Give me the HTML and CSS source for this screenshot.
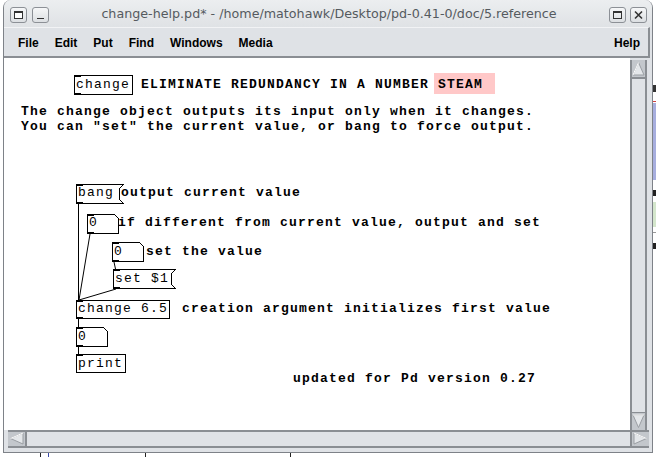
FILE: index.html
```html
<!DOCTYPE html>
<html>
<head>
<meta charset="utf-8">
<link rel="stylesheet" href="styles.css">
</head>
<body>
<div class="win">
  <div class="titlebar">
    <div class="tbtn"><svg width="15" height="14" viewBox="0 0 15 14"><rect x="3.5" y="3.5" width="8" height="7" fill="#fff" stroke="#333"/><line x1="3.5" y1="4.5" x2="11.5" y2="4.5" stroke="#333"/></svg></div>
    <div class="tbtn tbtn-gap"><svg width="15" height="14" viewBox="0 0 15 14"><line x1="4" y1="10.5" x2="11" y2="10.5" stroke="#333" stroke-width="1"/></svg></div>
    <div class="title">change-help.pd* - /home/matohawk/Desktop/pd-0.41-0/doc/5.reference</div>
    <div class="tbtn"><svg width="15" height="14" viewBox="0 0 15 14"><rect x="3.5" y="3.5" width="8" height="7" fill="none" stroke="#333"/><line x1="3.5" y1="4.5" x2="11.5" y2="4.5" stroke="#333"/></svg></div>
    <div class="tbtn tbtn-close"><svg width="15" height="14" viewBox="0 0 15 14"><path d="M4 3.5 L11 10.5 M11 3.5 L4 10.5" stroke="#333" stroke-width="1.6"/></svg></div>
  </div>
  <div class="menubar">
    <span class="mi">File</span>
    <span class="mi">Edit</span>
    <span class="mi">Put</span>
    <span class="mi">Find</span>
    <span class="mi">Windows</span>
    <span class="mi">Media</span>
    <span class="mi mi-help">Help</span>
  </div>
  <div class="main">
    <div class="canvas">
      <svg class="wires" width="626" height="372" viewBox="0 0 626 372">
        <rect x="430" y="15" width="61" height="21" fill="#ffc8c8"/>
        <g fill="none" stroke="#000" stroke-width="1" shape-rendering="crispEdges">
          <polygon points="70.5,17.5 128.5,17.5 128.5,36.5 70.5,36.5"/>
          <polygon points="72.5,126.5 119.5,126.5 115.5,130.5 115.5,141.5 119.5,145.5 72.5,145.5"/>
          <polygon points="83.5,156.5 110.5,156.5 114.5,160.5 114.5,175.5 83.5,175.5"/>
          <polygon points="108.5,184.5 135.5,184.5 139.5,188.5 139.5,203.5 108.5,203.5"/>
          <polygon points="109.5,211.5 171.5,211.5 167.5,215.5 167.5,226.5 171.5,230.5 109.5,230.5"/>
          <polygon points="72.5,242.5 165.5,242.5 165.5,260.5 72.5,260.5"/>
          <polygon points="72.5,269.5 99.5,269.5 103.5,273.5 103.5,288.5 72.5,288.5"/>
          <polygon points="72.5,296.5 121.5,296.5 121.5,314.5 72.5,314.5"/>
        </g>
        <g stroke="#000" stroke-width="1" fill="none">
          <line x1="74.5" y1="146" x2="74.5" y2="242"/>
          <line x1="86" y1="176" x2="75" y2="242"/>
          <line x1="110" y1="204" x2="111.5" y2="211"/>
          <line x1="112" y1="231" x2="75" y2="242"/>
          <line x1="74.5" y1="261" x2="74.5" y2="269"/>
          <line x1="74.5" y1="289" x2="74.5" y2="296"/>
        </g>
        <g fill="#000">
          <rect x="70" y="17" width="7" height="2"/><rect x="70" y="35" width="7" height="2"/>
          <rect x="72" y="126" width="7" height="2"/><rect x="72" y="144" width="7" height="2"/>
          <rect x="83" y="156" width="7" height="2"/><rect x="83" y="174" width="7" height="2"/>
          <rect x="108" y="184" width="7" height="2"/><rect x="108" y="202" width="7" height="2"/>
          <rect x="109" y="211" width="7" height="2"/><rect x="109" y="229" width="7" height="2"/>
          <rect x="72" y="242" width="7" height="2"/><rect x="72" y="259" width="7" height="2"/>
          <rect x="72" y="269" width="7" height="2"/><rect x="72" y="287" width="7" height="2"/>
          <rect x="72" y="296" width="7" height="2"/>
        </g>
      </svg>
      <div class="t obj t-change">change</div>
      <div class="t c-elim">ELIMINATE REDUNDANCY IN A NUMBER</div>
      <div class="t c-steam">STEAM</div>
      <div class="t c-para1">The change object outputs its input only when it changes.</div>
      <div class="t c-para2">You can "set" the current value, or bang to force output.</div>
      <div class="t obj o-bang">bang</div>
      <div class="t c-out">output current value</div>
      <div class="t obj o-num1">0</div>
      <div class="t c-ifdiff">if different from current value, output and set</div>
      <div class="t obj o-num2">0</div>
      <div class="t c-setval">set the value</div>
      <div class="t obj o-set">set $1</div>
      <div class="t obj o-chg">change 6.5</div>
      <div class="t c-creation">creation argument initializes first value</div>
      <div class="t obj o-num3">0</div>
      <div class="t obj o-print">print</div>
      <div class="t c-updated">updated for Pd version 0.27</div>
    </div>
    <div class="vscroll">
      <div class="arrow arrow-up"><svg width="13" height="15" viewBox="0 0 13 15"><polygon points="6.5,1.5 12,14 1,14" fill="#e4e7ea" stroke="#9a9ea3"/><polyline points="1,14 6.5,1.5" fill="none" stroke="#fff"/></svg></div>
      <div class="vtrough"></div>
      <div class="arrow arrow-down"><svg width="13" height="15" viewBox="0 0 13 15"><polygon points="1,1 12,1 6.5,13.5" fill="#e4e7ea" stroke="#9a9ea3"/><polyline points="1,1 12,1" fill="none" stroke="#fff"/></svg></div>
    </div>
  </div>
  <div class="hscroll">
    <div class="harrow"><svg width="15" height="13" viewBox="0 0 15 13"><polygon points="1.5,6.5 14,1 14,12" fill="#e4e7ea" stroke="#9a9ea3"/><polyline points="1.5,6.5 14,1" fill="none" stroke="#fff"/></svg></div>
    <div class="htrough"></div>
    <div class="harrow"><svg width="15" height="13" viewBox="0 0 15 13"><polygon points="1,1 13.5,6.5 1,12" fill="#e4e7ea" stroke="#9a9ea3"/><polyline points="1,1 13.5,6.5" fill="none" stroke="#fff"/></svg></div>
  </div>
</div>
<div class="behind-bottom">
  <span class="bb-tick bb-t1"></span>
  <span class="bb-tick bb-t2"></span>
  <span class="bb-tick bb-t3"></span>
  <span class="bb-tick bb-t4"></span>
</div>
<div class="behind-right">
  <div class="br-dark"></div>
  <div class="br-red"></div>
  <div class="br-lilac"></div>
  <div class="br-mark"></div>
  <div class="br-green"></div>
  <div class="br-line"></div>
  <div class="br-mark"></div>
</div>
</body>
</html>
```
FILE: styles.css
```css
html, body {
  margin: 0;
  padding: 0;
}
body {
  width: 656px;
  height: 457px;
  overflow: hidden;
  background: #ffffff;
  font-family: "Liberation Sans", Arial, sans-serif;
  position: relative;
}
.win {
  margin-left: 3px;
  width: 650px;
  height: 453px;
  box-sizing: border-box;
  border: 1px solid #7e8288;
  border-top: none;
  border-radius: 8px 8px 0 0;
  background: #dfe2e6;
  display: flex;
  flex-direction: column;
  overflow: hidden;
}
.titlebar {
  height: 27px;
  flex: none;
  display: flex;
  align-items: flex-start;
  box-sizing: border-box;
  padding: 7px 5px 0 6px;
  background: linear-gradient(#eceef0, #dfe2e5);
}
.tbtn {
  width: 15px;
  height: 14px;
  border: 1px solid #8c9096;
  border-radius: 3px;
  background: linear-gradient(#f6f7f8, #dcdfe2);
  flex: none;
}
.tbtn svg { display: block; }
.tbtn-gap { margin-left: 5px; }
.tbtn-close { margin-left: 4px; }
.title {
  flex: 1;
  text-align: center;
  font-family: "DejaVu Sans", sans-serif;
  font-size: 12.7px;
  color: #555a5f;
  line-height: 16px;
  margin-top: -1px;
  white-space: nowrap;
}
.menubar {
  height: 31px;
  flex: none;
  box-sizing: border-box;
  display: flex;
  align-items: center;
  gap: 16px;
  padding: 1px 8px 0 14px;
  margin-right: 2px;
  border-top: 1px solid #f2f3f5;
  border-bottom: 2px solid #8a8e93;
  border-right: 2px solid #8a8e93;
  background: #dfe2e6;
}
.mi {
  font-weight: bold;
  font-size: 12px;
  color: #000;
}
.mi-help { margin-left: auto; }
.main {
  height: 372px;
  flex: none;
  display: flex;
}
.canvas {
  width: 626px;
  height: 372px;
  background: #fff;
  position: relative;
  flex: none;
}
.wires {
  position: absolute;
  left: 0;
  top: 0;
}
.t {
  position: absolute;
  font-family: "Liberation Mono", "Courier New", monospace;
  font-size: 13px;
  letter-spacing: 1.2px;
  line-height: 17px;
  font-weight: bold;
  white-space: pre;
  color: #000;
}
.obj { font-weight: normal; }
.t-change { left: 72px; top: 18px; }
.c-elim { left: 137px; top: 18px; }
.c-steam { left: 434px; top: 18px; }
.c-para1 { left: 17px; top: 46px; line-height: 15px; }
.c-para2 { left: 17px; top: 61px; line-height: 15px; }
.o-bang { left: 74px; top: 126px; }
.c-out { left: 117px; top: 126px; }
.o-num1 { left: 85px; top: 156px; }
.c-ifdiff { left: 114px; top: 156px; }
.o-num2 { left: 110px; top: 185px; }
.c-setval { left: 142px; top: 185px; }
.o-set { left: 111px; top: 212px; }
.o-chg { left: 74px; top: 242px; }
.c-creation { left: 178px; top: 242px; }
.o-num3 { left: 74px; top: 270px; }
.o-print { left: 74px; top: 297px; }
.c-updated { left: 289px; top: 312px; }
.vscroll {
  width: 17px;
  box-sizing: border-box;
  border-left: 2px solid #8a8e93;
  border-right: 2px solid #8a8e93;
  display: flex;
  flex-direction: column;
  flex: none;
  margin-top: 2px;
}
.arrow {
  height: 17px;
  background: #c3c7cc;
  flex: none;
}
.arrow svg { display: block; margin: 1px 0 0 0; }
.arrow-up { border-bottom: 2px solid #8a8e93; }
.vtrough { flex: 1; background: #dfe2e6; }
.arrow-down { border-top: 1px solid #8a8e93; }
.hscroll {
  height: 18px;
  flex: none;
  display: flex;
  margin: 0 3px 0 4px;
  border-top: 2px solid #8a8e93;
  border-bottom: 2px solid #8a8e93;
  box-sizing: border-box;
}
.harrow {
  width: 17px;
  background: #c3c7cc;
  flex: none;
}
.harrow svg { display: block; margin: 0 0 0 1px; }
.htrough {
  flex: 1;
  background: #dfe2e6;
  border-left: 2px solid #8a8e93;
  border-right: 2px solid #8a8e93;
}
.behind-bottom {
  height: 4px;
  display: flex;
  padding-left: 40px;
  gap: 0;
}
.bb-tick {
  width: 1px;
  height: 4px;
  background: #222;
}
.bb-t1 { margin-left: 0; }
.bb-t2 { margin-left: 7px; background: #3a4aa8; }
.bb-t3 { margin-left: 96px; }
.bb-t4 { margin-left: 144px; }
.behind-right {
  position: absolute;
  left: 653px;
  top: 58px;
  width: 3px;
  height: 399px;
  background: #fff;
  display: flex;
  flex-direction: column;
}
.br-dark { height: 7px; margin-top: 27px; background: #333; }
.br-red { height: 1px; margin-top: 9px; background: #d04040; }
.br-lilac { height: 77px; margin-top: 1px; background: #a7aede; }
.br-mark { height: 6px; margin-top: 10px; background: #222; }
.br-green { height: 25px; margin-top: 6px; background: #d4e6cc; }
.br-line { height: 1px; margin-top: 5px; background: #999; }
```
